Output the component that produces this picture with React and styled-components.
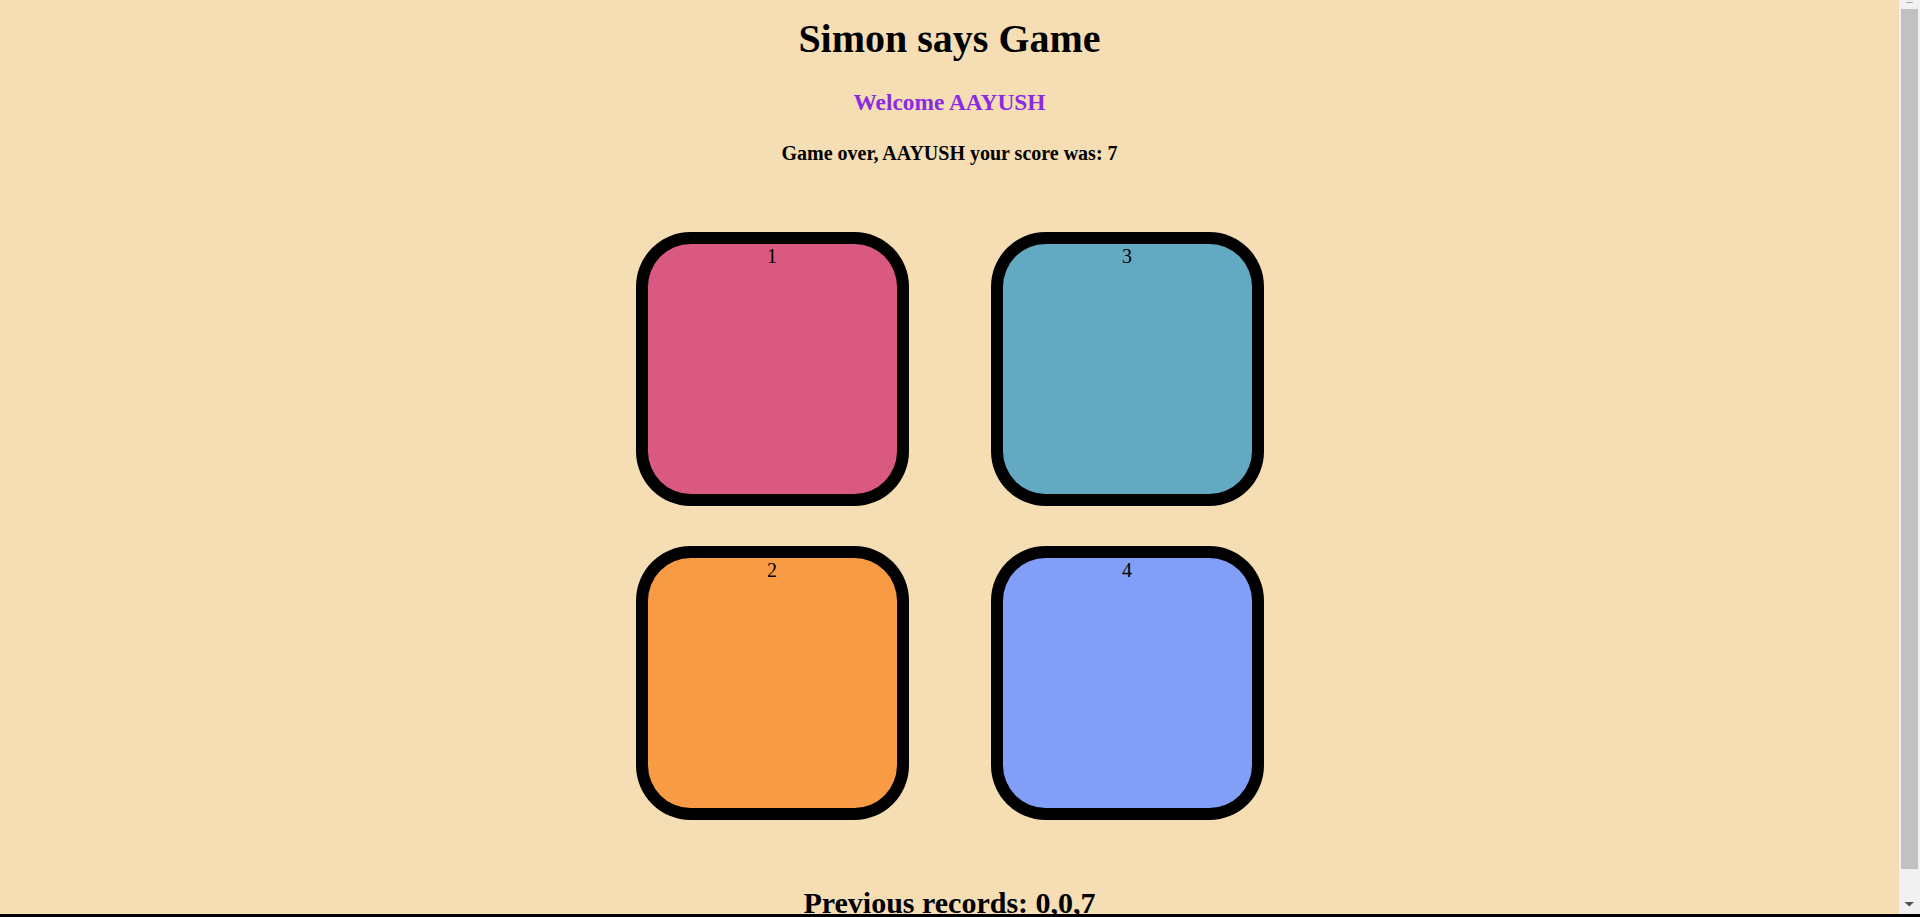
import React from "react";
import styled, { createGlobalStyle } from "styled-components";

const GlobalStyle = createGlobalStyle`
  html, body {
    margin: 0;
    padding: 0;
    overflow: hidden;
    background: #f5deb3;
  }
  body {
    font-family: "Liberation Serif", "Times New Roman", serif;
  }
`;

const Screen = styled.div`
  width: 1920px;
  height: 917px;
  display: flex;
  flex-direction: column;
`;

const Viewport = styled.div`
  flex: 1;
  min-height: 0;
  display: flex;
`;

const Page = styled.main`
  flex: 1;
  min-width: 0;
  overflow: hidden;
  background: #f5deb3;
  text-align: center;
  color: #000;
`;

const Title = styled.h1`
  margin: 16px 0 0;
  font-size: 40px;
  line-height: 1.15;
  font-weight: bold;
`;

const Welcome = styled.h3`
  margin: 27px 0 0;
  font-size: 23.4px;
  line-height: 1.15;
  font-weight: bold;
  color: #8a2be2;
`;

const Status = styled.h4`
  margin: 26px 0 0;
  font-size: 20px;
  line-height: 1.15;
  font-weight: bold;
`;

const Board = styled.div`
  margin-top: 67px;
  display: grid;
  grid-template-columns: repeat(2, 273px);
  grid-template-rows: repeat(2, 274px);
  grid-auto-flow: column;
  column-gap: 82px;
  row-gap: 40px;
  justify-content: center;
`;

const Pad = styled.div`
  box-sizing: border-box;
  width: 273px;
  height: 274px;
  padding-top: 1px;
  border: 12px solid #000;
  border-radius: 20%;
  background: ${(p) => p.$color};
  font-size: 20px;
  line-height: 1.15;
  font-weight: normal;
  text-align: center;
`;

const Records = styled.h2`
  margin: 66px 0 0;
  font-size: 30px;
  line-height: 1.15;
  font-weight: bold;
`;

const Scrollbar = styled.div`
  width: 21px;
  flex: none;
  background: #f1f1f1;
  display: flex;
  flex-direction: column;
`;

const ArrowStub = styled.div`
  height: 3px;
  flex: none;
  overflow: hidden;
  line-height: 0;
`;

const Thumb = styled.div`
  margin: 6px 2px 0;
  height: 860px;
  flex: none;
  background: #c1c1c1;
`;

const Spacer = styled.div`
  flex: 1;
`;

const ArrowButton = styled.div`
  height: 21px;
  flex: none;
  line-height: 0;
`;

const BottomEdge = styled.div`
  height: 3px;
  flex: none;
  background: #000;
`;

const pads = [
  { n: 1, color: "#d95980" },
  { n: 2, color: "#f99a45" },
  { n: 3, color: "#62a9c1" },
  { n: 4, color: "#819ef8" },
];

export default function App() {
  return (
    <>
      <GlobalStyle />
      <Screen>
        <Viewport>
          <Page>
            <Title>Simon says Game</Title>
            <Welcome>Welcome AAYUSH</Welcome>
            <Status>Game over, AAYUSH your score was: 7</Status>
            <Board>
              {pads.map((p) => (
                <Pad key={p.n} $color={p.color}>
                  {p.n}
                </Pad>
              ))}
            </Board>
            <Records>Previous records: 0,0,7</Records>
          </Page>
          <Scrollbar>
            <ArrowStub>
              <svg width="21" height="3" viewBox="0 0 21 3">
                <polygon points="7.5,0 13.5,0 14.5,2 6.5,2" fill="#a3a3a3" />
              </svg>
            </ArrowStub>
            <Thumb />
            <Spacer />
            <ArrowButton>
              <svg width="21" height="21" viewBox="0 0 21 21">
                <polygon points="5.5,9 15,9 10.25,13.5" fill="#505050" />
              </svg>
            </ArrowButton>
          </Scrollbar>
        </Viewport>
        <BottomEdge />
      </Screen>
    </>
  );
}
